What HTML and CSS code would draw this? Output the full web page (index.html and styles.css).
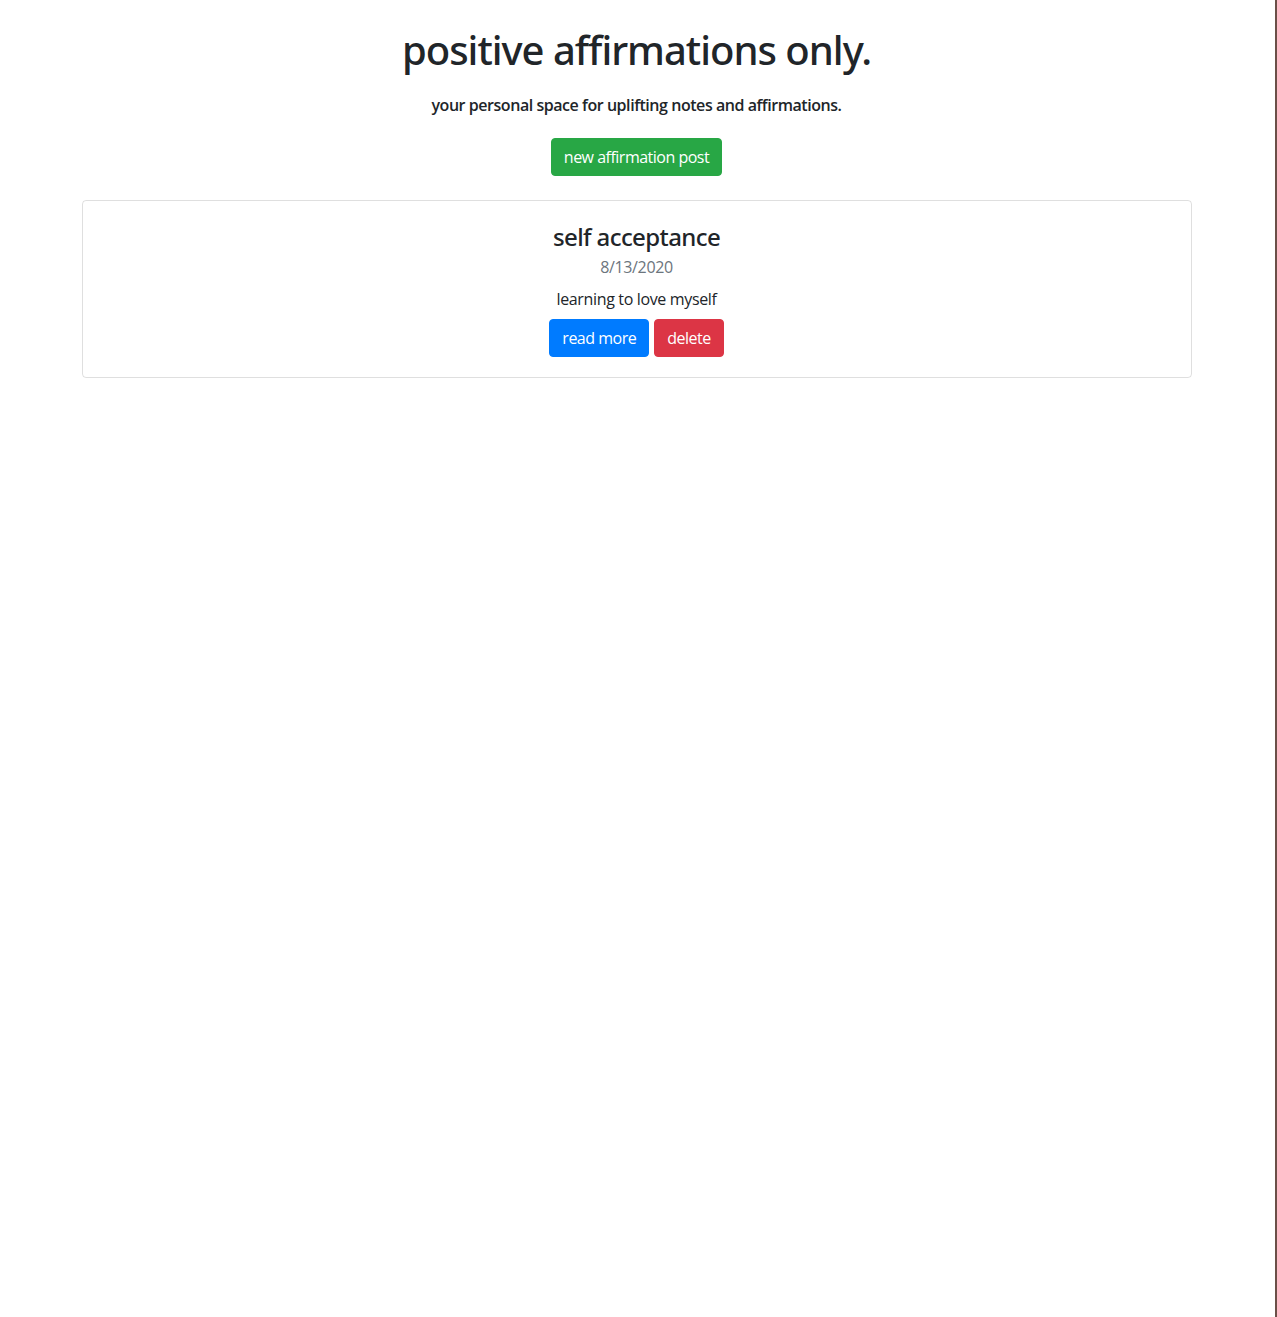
FILE: index.html
```html
<!DOCTYPE html>
<html lang="en">
<head>
<meta charset="utf-8">
<title>positive affirmations only.</title>
<link rel="stylesheet" href="styles.css">
</head>
<body>
<div class="page">
  <main class="container">
    <header class="hero">
      <h1 class="title">positive affirmations only.</h1>
      <p class="subtitle">your personal space for uplifting notes and affirmations.</p>
      <a class="btn btn-green" href="#">new affirmation post</a>
    </header>
    <section class="card">
      <h4 class="card-title">self acceptance</h4>
      <div class="card-date">8/13/2020</div>
      <p class="card-text">learning to love myself</p>
      <div class="card-actions">
        <a class="btn btn-blue" href="#">read more</a>
        <a class="btn btn-red" href="#">delete</a>
      </div>
    </section>
  </main>
  <div class="edge"></div>
</div>
</body>
</html>
```

FILE: styles.css
```css
html, body {
  margin: 0;
  padding: 0;
  background: #fff;
}
body {
  font-family: "Open Sans", "Noto Sans", "Liberation Sans", sans-serif;
  color: #212529;
  font-size: 16px;
  line-height: 1.5;
  letter-spacing: -0.35px;
}
.page {
  display: flex;
  min-height: 1317px;
}
.container {
  flex: 1;
  max-width: 1110px;
  margin: 0 auto;
  padding: 0 15px;
}
.edge {
  width: 2px;
  margin-left: 2px;
  background: #6b5048;
}
.hero {
  text-align: center;
  padding-top: 26px;
}
.title {
  margin: 0 0 19px;
  font-family: "Noto Sans", "Open Sans", sans-serif;
  font-size: 40px;
  font-weight: 500;
  line-height: 1.2;
  letter-spacing: -1px;
}
.subtitle {
  margin: 0 0 21px;
  font-size: 16px;
  font-weight: 600;
  letter-spacing: -0.45px;
}
.btn {
  display: inline-block;
  padding: 6px 12px;
  font-size: 16px;
  line-height: 24px;
  letter-spacing: -0.5px;
  color: #fff;
  text-decoration: none;
  border-radius: 4px;
  border: 1px solid transparent;
}
.btn-green { background: #28a745; border-color: #28a745; }
.btn-blue { background: #007bff; border-color: #007bff; }
.btn-red { background: #dc3545; border-color: #dc3545; }
.card {
  margin-top: 24px;
  border: 1px solid rgba(0,0,0,.125);
  border-radius: 4px;
  padding: 20px;
  text-align: center;
}
.card-title {
  margin: 2px 0 3px;
  font-family: "Noto Sans", "Open Sans", sans-serif;
  font-size: 24px;
  font-weight: 500;
  line-height: 1.2;
  letter-spacing: -0.6px;
}
.card-date {
  color: #6c757d;
  margin-bottom: 8px;
}
.card-text {
  margin: 0 0 8px;
}
.card-actions {
  display: flex;
  justify-content: center;
  gap: 5px;
}
```
